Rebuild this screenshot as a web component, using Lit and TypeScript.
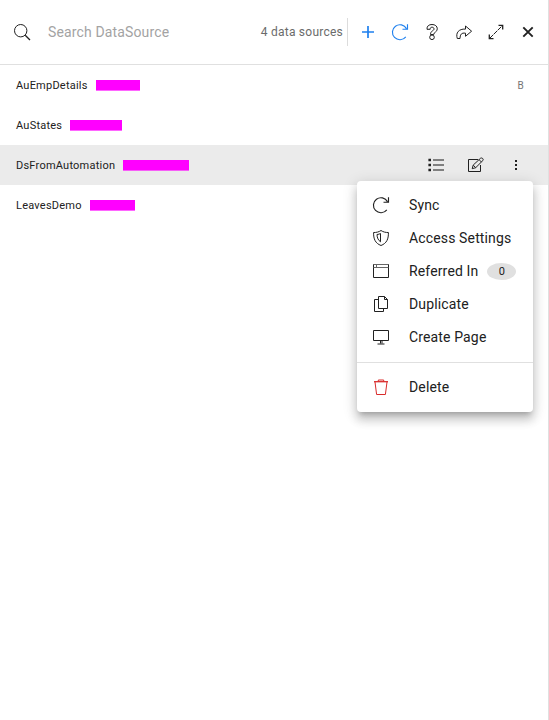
import { LitElement, html, css, svg, nothing } from "lit";
import { customElement, property, state } from "lit/decorators.js";
import { classMap } from "lit/directives/class-map.js";

const icons: Record<string, unknown> = {
  search: svg`<circle cx="6.7" cy="6.7" r="6.2"/><path d="M11.2 11.2L16 16" stroke-width="1.3"/>`,
  plus: svg`<path d="M8 2v12M2 8h12" stroke-width="1.7"/>`,
  sync: svg`<path d="M13.8 12.9A7.5 7.5 0 1 1 14.5 4.6M15.5 .2v5h-5" stroke-width="1.15"/>`,
  help: svg`<path d="M3 5.3C2.7 2 5 .5 8 .5s5.3 1.6 5.3 4.3c0 3.4-3.6 3.2-3.6 5.7H6.5c0-4 3.5-3.5 3.5-5.5C10 3.8 9.2 3.2 8 3.2s-1.9.7-1.8 2.1z"/><circle cx="8" cy="13.3" r="2.3"/>`,
  share: svg`<path d="M9.5 2l6.1 5.2-6.1 5.1V9.2C5.5 8.6 4.2 10.3 4 14.5H1.3C-.6 8.8 2.8 4.7 9.5 5.1z"/>`,
  expand: svg`<path d="M1.5 14.5l13-13" stroke-dasharray="5 .8"/><path d="M10.5 1.3h4.2v4.2M1.3 10.5v4.2h4.2" stroke-width="1.3"/>`,
  close: svg`<path d="M3.3 3.3l9.4 9.4M12.7 3.3l-9.4 9.4" stroke-width="1.9"/>`,
  list: svg`<path d="M5 3h11M5 8h11M5 13h11" stroke="#808080" stroke-width="2"/><path d="M.4 3H3M.4 8H3M.4 13H3" stroke-width="2.6"/>`,
  edit: svg`<path d="M10 2.5H.5v12h12V8M4.2 11.7l1-3.6L12.6 1.2c1.4-.9 3.4.9 2.3 2.3L7.7 10.7zM11.1 2.7l2.4 2.4M5.3 8.2l2.4 2.5"/>`,
  dots: svg`<path d="M7 4h2M7 8h2M7 12h2" stroke-width="2"/>`,
  shield: svg`<path d="M8 .5C5.9 2 3.2 2.6.6 2.5.4 9 2.3 13.3 8 15.5c5.7-2.2 7.6-6.5 7.4-13C12.8 2.6 10.1 2 8 .5z"/><path d="M7.5 3.5C6.6 4 5.5 4.4 4 4.5c.1 3.4 1.3 5.8 3.5 7.3z"/>`,
  window: svg`<path d="M.5 1.5h15v13H.5z"/><path d="M.5 4.5h15M3.5 2v2.5M1 1.5h14" stroke="#666"/>`,
  copy: svg`<path d="M5.5 3.5h-4v12h9v-3M5.5.5h6l3 3v9h-9zM11.5.5v3h3"/>`,
  monitor: svg`<path d="M.5 1.5h15v10H.5zM7.5 11.5v3M9 11.5v3M4.5 15h7"/>`,
  trash: svg`<path d="M2 3l1.6 12.5h8.8L14 3M5.3 2.5v-1.5h5.4v1.5"/><path d="M1 2.7h14" stroke-width="1.3"/>`,
};

@customElement("ui-icon")
class UiIcon extends LitElement {
  @property() name = "";
  static styles = css`
    :host { display: block; width: 16px; height: 16px; flex: none; }
    .glyph { display: block; overflow: visible; fill: none; stroke: currentColor; stroke-width: 1; }
  `;
  render() {
    return html`<svg class="glyph" width="16" height="16" viewBox="0 0 16 16">${icons[this.name]}</svg>`;
  }
}

interface Source { name: string; tag: number; badge?: string }
interface Entry { icon: string; label: string; count?: number }

@customElement("app-root")
class AppRoot extends LitElement {
  @state() private selected = "DsFromAutomation";

  private sources: Source[] = [
    { name: "AuEmpDetails", tag: 44.5, badge: "B" },
    { name: "AuStates", tag: 52 },
    { name: "DsFromAutomation", tag: 65.5 },
    { name: "LeavesDemo", tag: 45 },
  ];

  private entries: Entry[] = [
    { icon: "sync", label: "Sync" },
    { icon: "shield", label: "Access Settings" },
    { icon: "window", label: "Referred In", count: 0 },
    { icon: "copy", label: "Duplicate" },
    { icon: "monitor", label: "Create Page" },
  ];

  static styles = css`
    :host {
      display: block; box-sizing: border-box; height: 100vh; overflow: hidden;
      background: #fff; border-right: 1px solid #e0e0e0; color: #212121;
      font-family: Roboto, "Liberation Sans", sans-serif;
    }
    .header {
      display: flex; align-items: center; box-sizing: border-box; height: 65px;
      padding: 0 4px 0 14px; border-bottom: 1px solid #e0e0e0;
    }
    .query { flex: 1; margin-left: 18px; font-size: 14px; letter-spacing: 0.14px; color: #a3a3a3; }
    .total { font-size: 12px; letter-spacing: 0.24px; color: #6b6b6b; padding-right: 4px; }
    .tools { display: flex; height: 28px; align-items: center; border-left: 1px solid #dcdcdc; padding-left: 4px; }
    .tool { width: 32px; display: flex; justify-content: center; }
    .blue { color: #1f80ee; }
    .row { position: relative; display: flex; align-items: center; height: 40px; padding: 0 16px; font-size: 11px; letter-spacing: 0.23px; }
    .active { background: #ebebeb; }
    .tag { box-sizing: border-box; height: 11px; margin-left: 8px; background: #f0f; background-clip: padding-box; border-bottom: 1px solid rgba(255,0,255,.6); }
    .badge { margin-left: auto; margin-right: 8px; font-size: 10px; color: #757575; }
    .actions { margin-left: auto; margin-right: 8px; display: flex; gap: 24px; }
    .menu {
      position: absolute; z-index: 1; top: 36px; right: 15.5px; width: 175.5px; height: 231px;
      box-sizing: border-box; padding-top: 7.5px; background: #fff; border-radius: 4px;
      box-shadow: 0 5px 5px -3px rgba(0,0,0,.2), 0 8px 10px 1px rgba(0,0,0,.14), 0 3px 14px 2px rgba(0,0,0,.12);
      font-size: 14px; letter-spacing: 0.14px;
    }
    .entry { display: flex; align-items: center; height: 33px; padding-left: 16px; white-space: nowrap; }
    .label { margin-left: 20px; }
    .count {
      width: 29px; height: 17px; margin-left: 9px; border-radius: 50%; background: #e0e0e0;
      font-size: 11px; line-height: 17px; text-align: center; letter-spacing: 0;
    }
    .rule { height: 1px; margin: 8.5px 0 7.5px; background: #e0e0e0; }
    .danger { color: #d92b2b; }
  `;

  private entry(e: Entry, danger = false) {
    return html`<div class="entry">
      <ui-icon class=${classMap({ danger })} name=${e.icon}></ui-icon>
      <span class="label">${e.label}</span>
      ${e.count === undefined ? nothing : html`<span class="count">${e.count}</span>`}
    </div>`;
  }

  private row(s: Source) {
    const active = s.name === this.selected;
    return html`<div class=${classMap({ row: true, active })} @click=${() => (this.selected = s.name)}>
      <span>${s.name}</span><span class="tag" style="width:${s.tag}px"></span>
      ${s.badge ? html`<span class="badge">${s.badge}</span>` : nothing}
      ${active
        ? html`<div class="actions">${["list", "edit", "dots"].map((n) => html`<ui-icon name=${n}></ui-icon>`)}</div>
            <div class="menu">
              ${this.entries.map((e) => this.entry(e))}
              <div class="rule"></div>
              ${this.entry({ icon: "trash", label: "Delete" }, true)}
            </div>`
        : nothing}
    </div>`;
  }

  render() {
    const tools = ["plus", "sync", "help", "share", "expand", "close"];
    return html`
      <div class="header">
        <ui-icon name="search"></ui-icon>
        <span class="query">Search DataSource</span>
        <span class="total">${this.sources.length} data sources</span>
        <div class="tools">
          ${tools.map((n, i) => html`<div class=${classMap({ tool: true, blue: i < 2 })}><ui-icon name=${n}></ui-icon></div>`)}
        </div>
      </div>
      ${this.sources.map((s) => this.row(s))}
    `;
  }
}
